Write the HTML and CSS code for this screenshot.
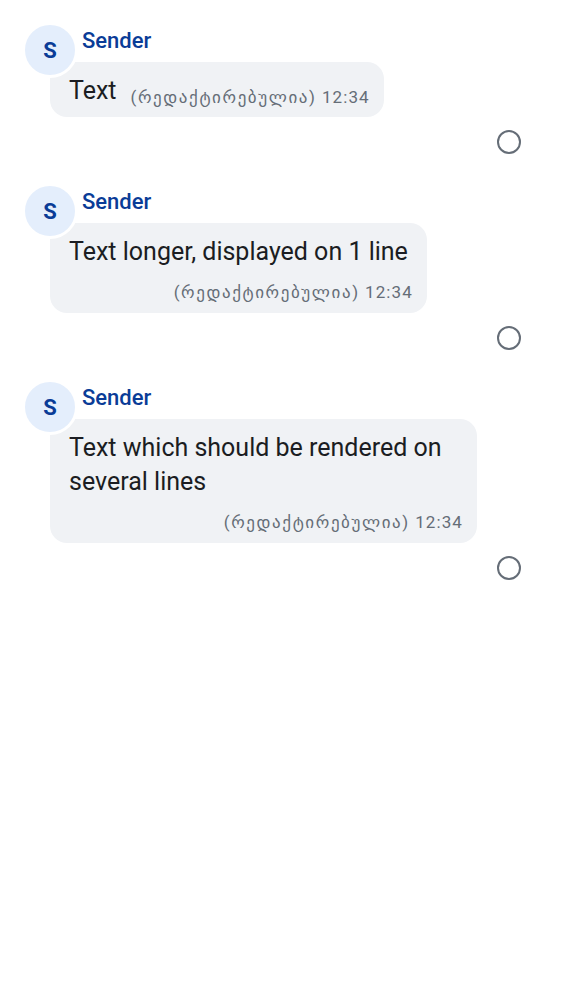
FILE: index.html
```html
<!DOCTYPE html>
<html lang="ka">
<head>
<meta charset="utf-8">
<title>Timeline</title>
<link rel="stylesheet" href="styles.css">
</head>
<body>
<div class="timeline">
  <div class="event">
    <div class="avatar">S</div>
    <div class="sender">Sender</div>
    <div class="bubble inline">
      <span class="body">Text</span>
      <span class="meta"><span class="edited">(რედაქტირებულია)</span> 12:34</span>
    </div>
    <div class="receipt"><span class="radio"></span></div>
  </div>
  <div class="event">
    <div class="avatar">S</div>
    <div class="sender">Sender</div>
    <div class="bubble stacked">
      <span class="body">Text longer, displayed on 1 line</span>
      <span class="meta"><span class="edited">(რედაქტირებულია)</span> 12:34</span>
    </div>
    <div class="receipt"><span class="radio"></span></div>
  </div>
  <div class="event">
    <div class="avatar">S</div>
    <div class="sender">Sender</div>
    <div class="bubble stacked">
      <span class="body">Text which should be rendered on several lines</span>
      <span class="meta"><span class="edited">(რედაქტირებულია)</span> 12:34</span>
    </div>
    <div class="receipt"><span class="radio"></span></div>
  </div>
</div>
</body>
</html>
```

FILE: styles.css
```css
html, body {
  margin: 0;
  padding: 0;
  background: #ffffff;
}

body {
  font-family: Roboto, "DejaVu Sans", sans-serif;
  color: #1b1d22;
}

.timeline {
  display: flex;
  flex-direction: column;
}

.event {
  position: relative;
  display: flex;
  flex-direction: column;
  padding: 29px 0 7px 0;
}

.avatar {
  position: absolute;
  left: 22px;
  top: 22px;
  z-index: 2;
  width: 50px;
  height: 50px;
  border: 3px solid #ffffff;
  border-radius: 50%;
  background: #e4eefc;
  color: #0a3c97;
  font-size: 22px;
  font-weight: 700;
  display: flex;
  align-items: center;
  justify-content: center;
}

.sender {
  margin-left: 82px;
  font-size: 22px;
  line-height: 25px;
  font-weight: 500;
  color: #0a3c97;
  margin-bottom: 8px;
  position: relative;
  top: -1px;
}

.bubble {
  position: relative;
  z-index: 1;
  margin-left: 50px;
  width: fit-content;
  max-width: 427px;
  box-sizing: border-box;
  background: #f0f2f5;
  border-radius: 17px;
  padding: 12px 14px 9px 19px;
}

.bubble.inline {
  display: flex;
  align-items: flex-end;
  gap: 14px;
}

.bubble.stacked {
  display: flex;
  flex-direction: column;
  gap: 12px;
}

.body {
  font-size: 25px;
  line-height: 34px;
}

.bubble.stacked .body {
  margin-right: 5px;
}

.meta {
  font-size: 17px;
  line-height: 23px;
  letter-spacing: 1.1px;
  color: #656d77;
  white-space: nowrap;
}

.edited {
  letter-spacing: 1.6px;
}

.bubble.inline .meta {
  margin-bottom: -1px;
}

.bubble.stacked .meta {
  align-self: flex-end;
}

.receipt {
  display: flex;
  justify-content: flex-end;
  padding-right: 41px;
  margin-top: 13px;
}

.radio {
  width: 24px;
  height: 24px;
  box-sizing: border-box;
  border: 2px solid #656d77;
  border-radius: 50%;
}
```
